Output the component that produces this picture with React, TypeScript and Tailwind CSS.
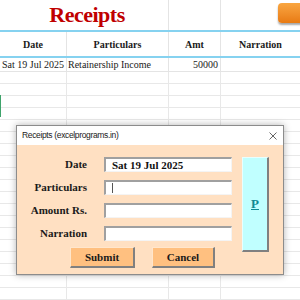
import React from "react";

const serif = { fontFamily: '"Liberation Serif", "Times New Roman", serif' };
const sans = { fontFamily: '"Liberation Sans", Arial, sans-serif' };

function Field({ label, value, caret }: { label: string; value?: string; caret?: boolean }) {
  return (
    <>
      <div className="text-right text-[11px] font-bold leading-[15px] text-[#1a1a1a]" style={serif}>
        {label}
      </div>
      <div className="h-[15px] bg-white border-t-2 border-l-2 border-b border-r border-t-[#a0a0a0] border-l-[#a0a0a0] border-b-[#f4f4f4] border-r-[#f4f4f4] flex items-center pl-[6px]">
        {value && (
          <span className="text-[11px] font-bold leading-none text-[#111]" style={serif}>
            {value}
          </span>
        )}
        {caret && <span className="block w-px h-[10px] bg-[#555]" />}
      </div>
    </>
  );
}

export default function App() {
  const emptyRows = Array.from({ length: 20 });
  return (
    <div className="relative w-[300px] h-[300px] overflow-hidden bg-white">
      {/* sheet */}
      <div className="flex flex-col">
        <div className="flex h-[30px]">
          <div className="w-[168px] flex items-center justify-center pl-[6px]">
            <span className="text-[22px] font-bold text-[#c00000] leading-none tracking-[-0.5px]" style={serif}>
              Receipts
            </span>
          </div>
          <div className="w-[52px] border-l border-[#e4e4e4]" />
          <div className="w-[80px] border-l border-[#e4e4e4]" />
        </div>
        <div className="h-[2px] bg-[#86d2f0]" />
        <div className="flex h-[24px] text-[10px] font-bold text-[#1a1a1a]" style={serif}>
          <div className="w-[66px] flex items-center justify-center">Date</div>
          <div className="w-[102px] border-l border-[#e4e4e4] flex items-center justify-center">Particulars</div>
          <div className="w-[52px] border-l border-[#e4e4e4] flex items-center justify-center">Amt</div>
          <div className="w-[80px] border-l border-[#e4e4e4] flex items-center justify-center">Narration</div>
        </div>
        <div className="h-[2px] bg-[#86d2f0]" />
        <div className="flex h-[14px] text-[10px] text-[#1a1a1a] border-b border-[#e4e4e4]" style={serif}>
          <div className="w-[66px] flex items-center pl-[2px] whitespace-nowrap">Sat 19 Jul 2025</div>
          <div className="w-[102px] border-l border-[#e4e4e4] flex items-center pl-[1px] whitespace-nowrap">Retainership Income</div>
          <div className="w-[52px] border-l border-[#e4e4e4] flex items-center justify-end pr-[2px]">50000</div>
          <div className="w-[80px] border-l border-[#e4e4e4]" />
        </div>
        {emptyRows.map((_, i) => (
          <div key={i} className="flex h-[12px] border-b border-[#e8e8e8]">
            <div className="w-[66px]" />
            <div className="w-[102px] border-l border-[#e8e8e8]" />
            <div className="w-[52px] border-l border-[#e8e8e8]" />
            <div className="w-[80px] border-l border-[#e8e8e8]" />
          </div>
        ))}
      </div>

      {/* selected cell edge */}
      <div className="absolute left-0 top-[95px] w-px h-[22px] bg-[#3fa36b]" />

      {/* orange shape button */}
      <div className="absolute left-[278px] top-[3px] w-[40px] h-[20px] rounded-[4px] bg-gradient-to-b from-[#f9a640] to-[#e87a10] shadow-[0_2px_2px_rgba(0,0,0,0.35)]" />

      {/* dialog */}
      <div className="absolute left-[16px] top-[125px] w-[268px] h-[150px] border border-[#8c8c8c] bg-[#ffe0c2] shadow-[0_0_7px_rgba(0,0,0,0.3)] flex flex-col">
        <div className="h-[19px] bg-white flex items-center justify-between pl-[5px] pr-[6px]">
          <span className="text-[8.5px] tracking-[-0.35px] text-[#222]" style={sans}>
            Receipts (excelprograms.in)
          </span>
          <svg width="8" height="8" viewBox="0 0 8 8">
            <path d="M0.5 0.5 L7.5 7.5 M7.5 0.5 L0.5 7.5" stroke="#555" strokeWidth="0.9" />
          </svg>
        </div>
        <div className="flex pt-[12px]">
          <div className="flex flex-col w-[215px]">
            <div className="grid grid-cols-[70px_128px] gap-x-[17px] gap-y-[8px]">
              <Field label="Date" value="Sat 19 Jul 2025" />
              <Field label="Particulars" caret />
              <Field label="Amount Rs." />
              <Field label="Narration" />
            </div>
            <div className="flex gap-[17px] pl-[53px] mt-[6px]">
              <div className="w-[65px] h-[21px] bg-[#ffc080] border-t border-l border-b-2 border-r-2 border-t-[#ffe6cc] border-l-[#ffe6cc] border-b-[#808080] border-r-[#808080] flex items-center justify-center text-[11px] font-bold text-[#1a1a1a]" style={serif}>
                Submit
              </div>
              <div className="w-[63px] h-[21px] bg-[#ffc080] border-t border-l border-b-2 border-r-2 border-t-[#ffe6cc] border-l-[#ffe6cc] border-b-[#808080] border-r-[#808080] flex items-center justify-center text-[11px] font-bold text-[#1a1a1a]" style={serif}>
                Cancel
              </div>
            </div>
          </div>
          <div className="ml-[10px] w-[27px] h-[95px] bg-[#c0ffff] border-t border-l border-b-2 border-r-2 border-t-[#e8ffff] border-l-[#e8ffff] border-b-[#808080] border-r-[#808080] flex items-center justify-center">
            <span className="text-[13px] font-bold underline text-[#0f8a94]" style={serif}>
              P
            </span>
          </div>
        </div>
      </div>
    </div>
  );
}
